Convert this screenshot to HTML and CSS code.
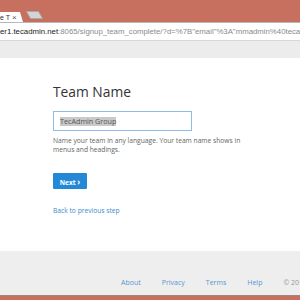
FILE: index.html
```html
<html>
<head>
	<title>Signup</title>
	<link rel="stylesheet" href="styles.css">
</head>
<body>

<div class="window">
	<div class="titlebar">
		<div class="tab">
			<span class="tab-title">e T</span>
			<span class="tab-close">&times;</span>
		</div>
		<div class="newtab"></div>
	</div>

	<div class="omnibox">
		<span class="host">er1.tecadmin.net</span><span class="path">:8065/signup_team_complete/?d=%7B"email"%3A"mmadmin%40tecadmin.net"</span>
	</div>

	<div class="bookmarks"></div>

	<div class="page">
		<div class="signup">
			<h2>Team Name</h2>
			<div class="field"><span class="selected">TecAdmin Group</span></div>
			<p class="hint">Name your team in any language. Your team name shows in menus and headings.</p>
			<button class="btn">Next <span class="chev">&rsaquo;</span></button>
			<a class="back" href="#">Back to previous step</a>
		</div>
	</div>

	<div class="footer">
		<a href="#">About</a>
		<a href="#">Privacy</a>
		<a href="#">Terms</a>
		<a href="#">Help</a>
		<span class="copy">&copy; 2015 Mattermost</span>
	</div>

	<div class="frame"></div>
</div>

</body>
</html>
```

FILE: styles.css
```css
body {
	margin: 0;
	background: #fff;
	font-family: "Open Sans", sans-serif;
}

div.window {
	width: 300px;
	height: 300px;
	display: flex;
	flex-direction: column;
	overflow: hidden;
}

div.titlebar {
	height: 22px;
	flex: none;
	background: #c7705f;
	display: flex;
	align-items: flex-end;
}

div.tab {
	width: 23px;
	height: 10px;
	background: #fff;
	clip-path: polygon(0 0, 20px 0, 23px 100%, 0 100%);
	display: flex;
	align-items: center;
	font-family: "Liberation Sans", sans-serif;
	font-size: 7px;
	color: #333;
}

.tab-title {
	width: 12px;
	overflow: hidden;
	white-space: nowrap;
}

.tab-close {
	font-size: 8px;
	color: #555;
}

div.newtab {
	width: 11px;
	height: 6px;
	margin: 0 0 3px 5px;
	background: #d4d4d4;
	border: 1px solid #a9a9a9;
	border-radius: 1px;
	transform: skewX(30deg);
}

div.omnibox {
	height: 17px;
	flex: none;
	background: #fff;
	border-top: 1px solid #b8b8b8;
	border-bottom: 1px solid #d8d8d8;
	display: flex;
	align-items: center;
	white-space: nowrap;
	font-family: "Liberation Sans", sans-serif;
	font-size: 7.8px;
	color: #8a8a8a;
}

.host {
	color: #222;
}

div.bookmarks {
	height: 17px;
	flex: none;
	background: #ececec;
}

div.page {
	flex: 1;
	padding-top: 24px;
}

div.signup {
	width: 194px;
	margin: 0 auto;
}

h2 {
	margin: 0;
	font-size: 13.8px;
	font-weight: 400;
	line-height: 19px;
	color: #333;
}

div.field {
	margin-top: 10px;
	height: 20px;
	width: 139px;
	box-sizing: border-box;
	border: 1px solid #8dbce8;
	display: flex;
	align-items: center;
	padding-left: 6px;
	font-size: 7.2px;
	color: #555;
}

.selected {
	background: #c9c9c9;
	line-height: 9px;
}

p.hint {
	margin: 5px 0 0;
	font-size: 6.7px;
	line-height: 9px;
	color: #666;
}

button.btn {
	display: block;
	margin-top: 19px;
	width: 34px;
	height: 16px;
	padding: 0;
	border: 0;
	border-radius: 1px;
	background: #2389d7;
	color: #fff;
	font-family: "Open Sans", sans-serif;
	font-size: 6.6px;
	font-weight: 700;
}

.chev {
	font-size: 8px;
}

a.back {
	display: block;
	margin-top: 17px;
	font-size: 6.7px;
	color: #3d8ad0;
	text-decoration: none;
}

div.footer {
	height: 44px;
	flex: none;
	background: #eeeeee;
	display: flex;
	gap: 21px;
	padding: 27px 0 0 121px;
	box-sizing: border-box;
	white-space: nowrap;
	font-size: 7px;
	line-height: 10px;
}

div.footer a {
	color: #5a96d2;
	text-decoration: none;
}

.copy {
	color: #999;
}

div.frame {
	height: 4px;
	flex: none;
	background: #c7705f;
	border-top: 1px solid #a2867c;
}
```
